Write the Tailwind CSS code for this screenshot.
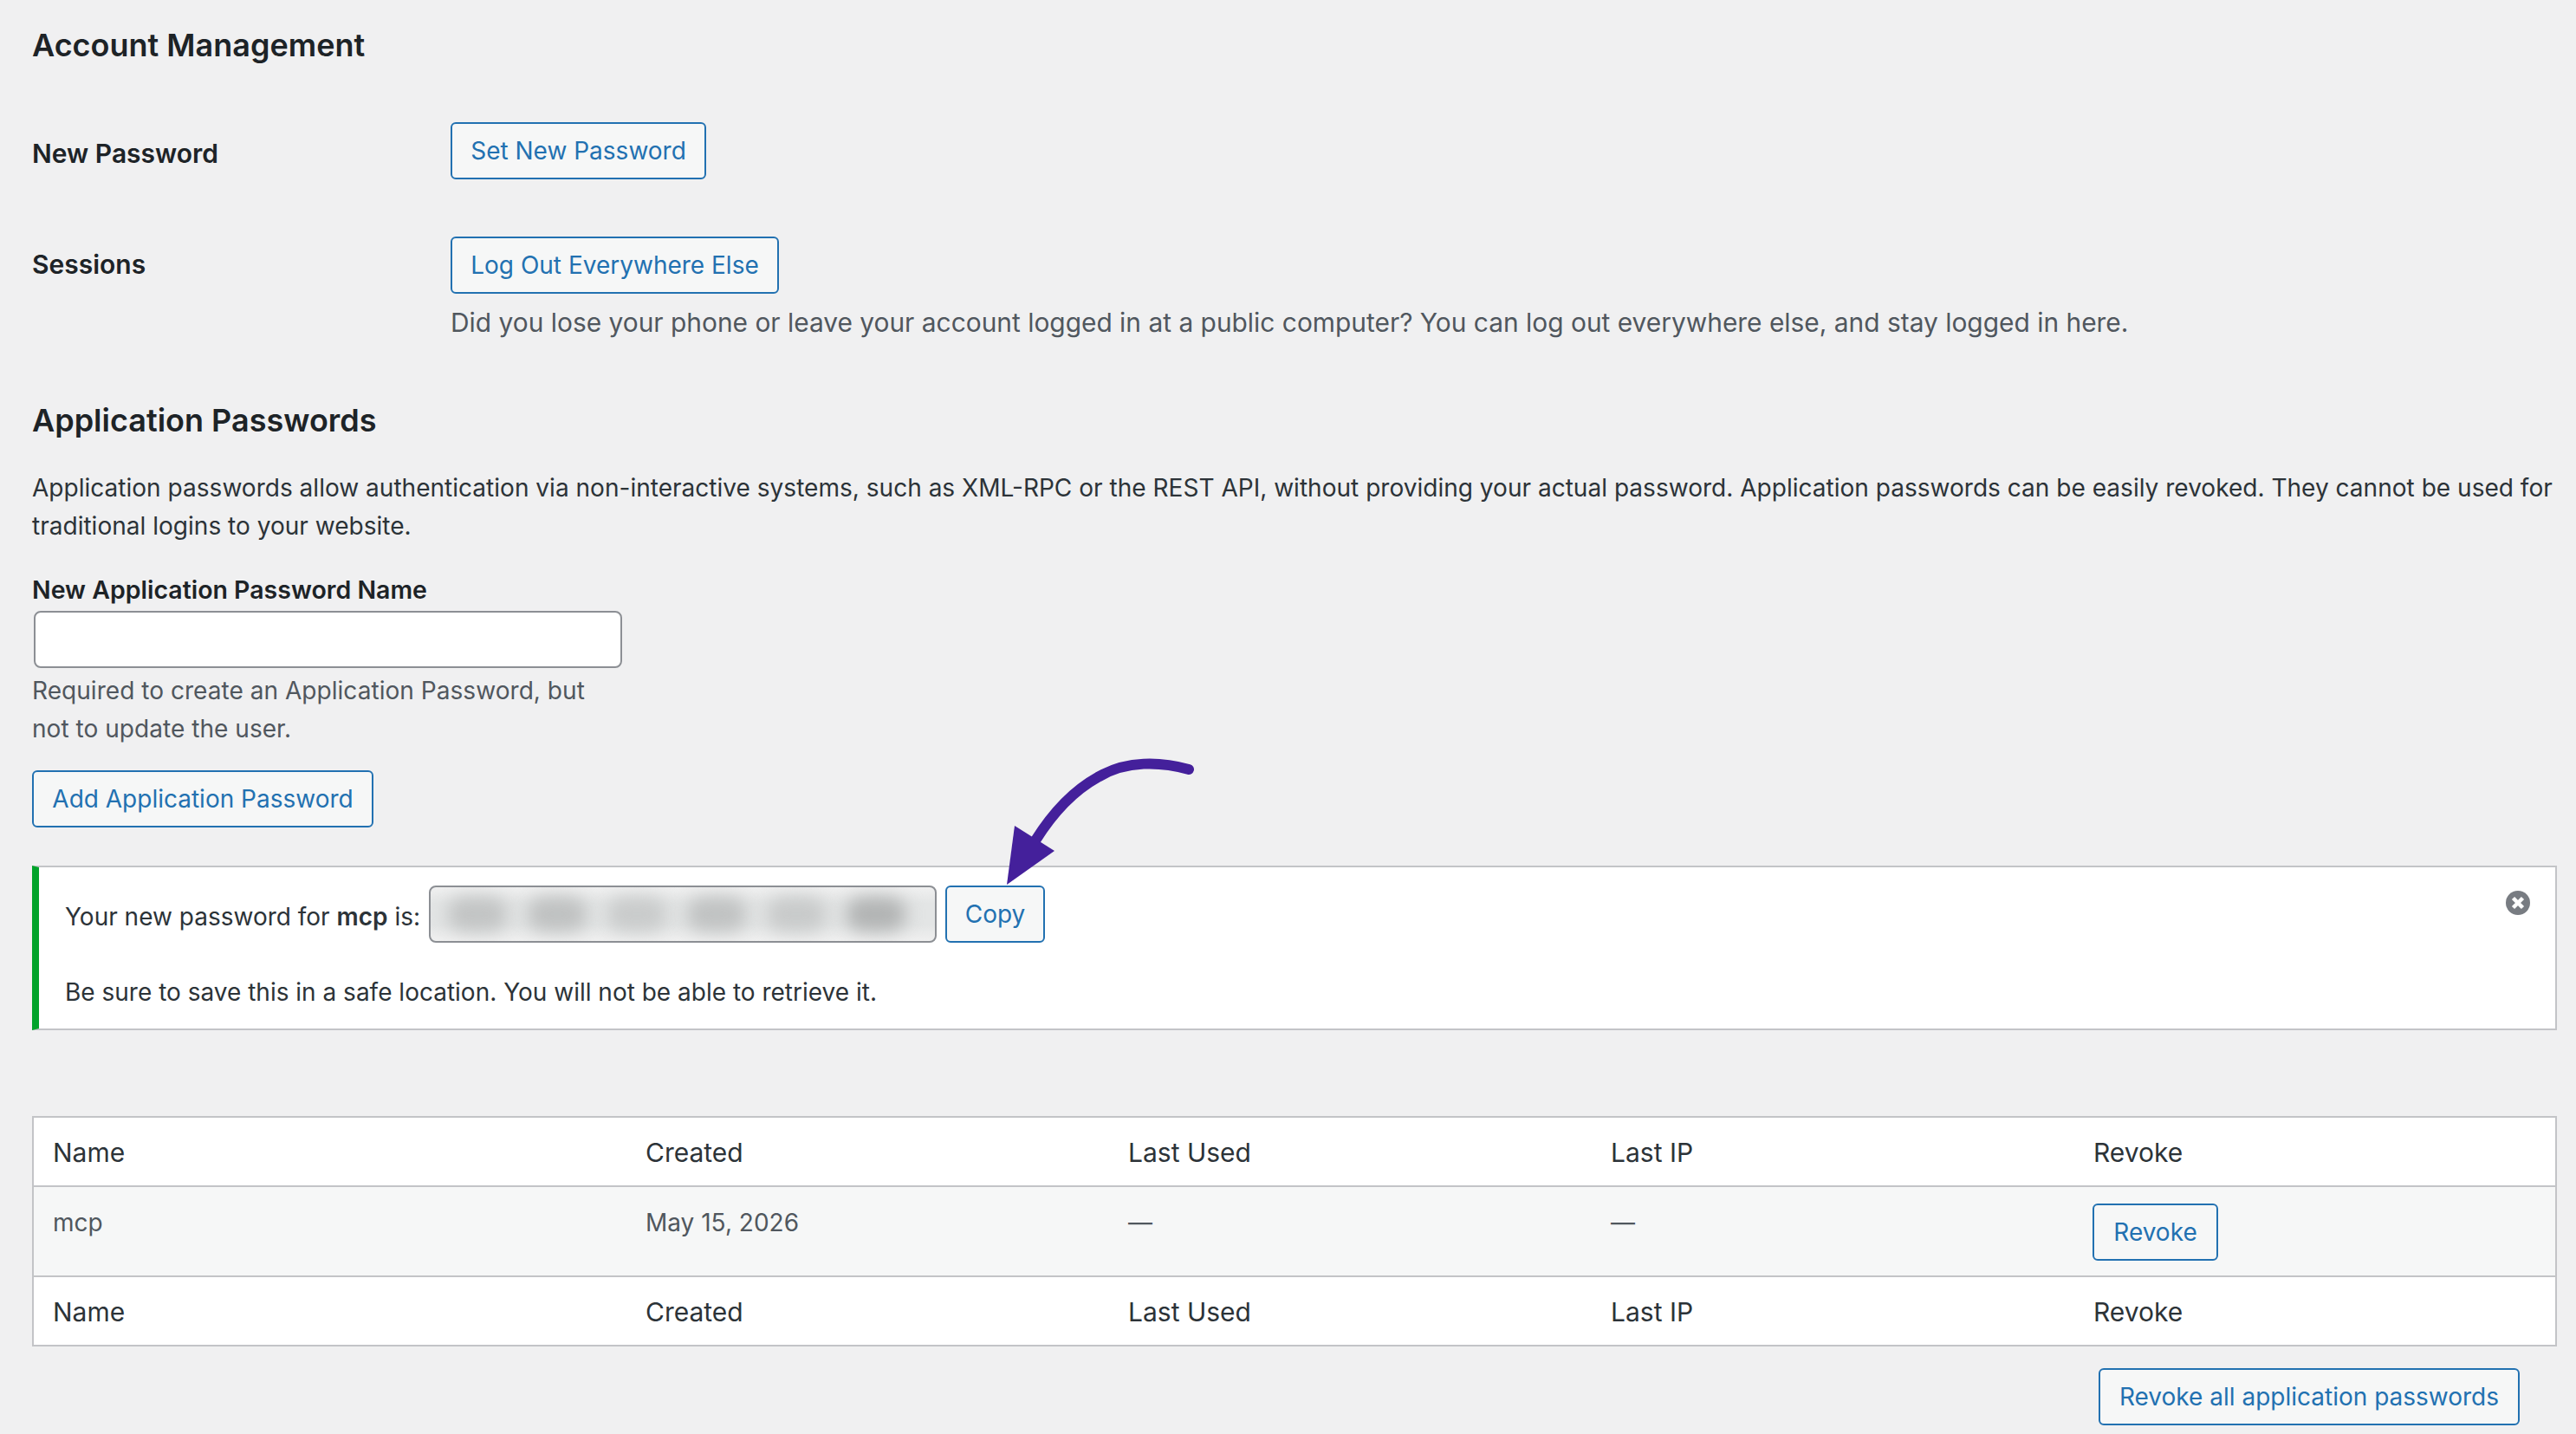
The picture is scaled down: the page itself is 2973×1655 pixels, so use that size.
<!DOCTYPE html>
<html lang="en">
<head>
  <meta charset="UTF-8" />
  <title>Profile</title>
  <script src="https://cdn.jsdelivr.net/npm/@tailwindcss/browser@4"></script>
</head>
<body class="bg-[#f0f0f1] text-[#2c3338] font-['Inter','Liberation_Sans',sans-serif] text-[28px] leading-[44px] relative w-[2973px] h-[1655px] overflow-hidden">

  <div class="pl-[37px] pr-[22px] pt-[28px]">
    <!-- Account Management -->
    <h2 class="text-[36px] leading-[48px] font-semibold text-[#1d2327]">Account Management</h2>

    <div class="flex mt-[65px]">
      <div class="w-[483px] pt-[14px] font-semibold text-[#1d2327] text-[30px]">New Password</div>
      <button class="h-[66px] w-[295px] border-2 border-[#2271b1] rounded-[6px] bg-[#f6f7f7] text-[#2271b1]">Set New Password</button>
    </div>

    <div class="flex mt-[66px]">
      <div class="w-[483px] pt-[10px] font-semibold text-[#1d2327] text-[30px]">Sessions</div>
      <div>
        <button class="h-[66px] w-[379px] border-2 border-[#2271b1] rounded-[6px] bg-[#f6f7f7] text-[#2271b1]">Log Out Everywhere Else</button>
        <p class="text-[#50575e] mt-[11px] text-[29.9px]">Did you lose your phone or leave your account logged in at a public computer? You can log out everywhere else, and stay logged in here.</p>
      </div>
    </div>

    <!-- Application Passwords -->
    <h2 class="text-[36px] leading-[48px] font-semibold text-[#1d2327] mt-[67px]">Application Passwords</h2>
    <p class="mt-[32px] pr-[2px] text-[28.05px]">Application passwords allow authentication via non-interactive systems, such as XML-RPC or the REST API, without providing your actual password. Application passwords can be easily revoked. They cannot be used for traditional logins to your website.</p>

    <label class="block font-semibold text-[#1d2327] text-[28.5px] mt-[30px]">New Application Password Name</label>
    <input type="text" class="block w-[679px] h-[66px] ml-[2px] mt-[2px] border-2 border-[#8c8f94] rounded-[8px] bg-white" />
    <p class="w-[680px] text-[#50575e] text-[28.1px] mt-[4px]">Required to create an Application Password, but not to update the user.</p>
    <button class="h-[66px] w-[394px] mt-[26px] border-2 border-[#2271b1] rounded-[6px] bg-[#f6f7f7] text-[#2271b1]">Add Application Password</button>

    <!-- Notice -->
    <div class="relative mt-[44px] h-[190px] border-2 border-[#c3c4c7] border-l-[8px] border-l-[#00a32a] bg-white pl-[30px] pt-[21px]">
      <div class="flex items-center gap-[10px]">
        <span class="pt-[5px]">Your new password for <b class="font-semibold">mcp</b> is:</span>
        <div class="flex items-center justify-center gap-[22px] w-[586px] h-[66px] pr-[14px] border-2 border-[#8c8f94] rounded-[8px] bg-[linear-gradient(180deg,#f0f0f0,#e3e5e5_30%,#e3e5e5_70%,#f0f0f0)] overflow-hidden">
          <span class="w-[70px] h-[40px] rounded-full bg-[#c2c4c4] blur-[10px]"></span>
          <span class="w-[70px] h-[40px] rounded-full bg-[#bfc1c1] blur-[10px]"></span>
          <span class="w-[70px] h-[40px] rounded-full bg-[#c9cbcb] blur-[10px]"></span>
          <span class="w-[70px] h-[40px] rounded-full bg-[#c0c2c2] blur-[10px]"></span>
          <span class="w-[70px] h-[40px] rounded-full bg-[#c8caca] blur-[10px]"></span>
          <span class="w-[70px] h-[40px] rounded-full bg-[#b2b4b4] blur-[10px]"></span>
        </div>
        <button class="h-[66px] w-[115px] border-2 border-[#2271b1] rounded-[6px] bg-[#f6f7f7] text-[#2271b1]">Copy</button>
      </div>
      <p class="mt-[35px]">Be sure to save this in a safe location. You will not be able to retrieve it.</p>
      <svg class="absolute right-[29px] top-[27px] w-[28px] h-[28px]" viewBox="0 0 28 28">
        <circle cx="14" cy="14" r="14" fill="#787c82"/>
        <path d="M8.5 8.5l11 11M19.5 8.5l-11 11" stroke="#fff" stroke-width="4.5"/>
      </svg>
    </div>

    <!-- Table -->
    <table class="w-[2914px] table-fixed mt-[99px] border-2 border-[#c3c4c7] bg-white border-collapse">
      <colgroup><col class="w-[684px]"/><col class="w-[557px]"/><col class="w-[557px]"/><col class="w-[557px]"/><col/></colgroup>
      <thead>
        <tr class="h-[80px] border-b-2 border-[#c3c4c7] text-left text-[30px]">
          <th class="font-normal pl-[22px] pt-[2px]">Name</th><th class="font-normal pl-[23px] pt-[2px]">Created</th><th class="font-normal pl-[23px] pt-[2px]">Last Used</th><th class="font-normal pl-[23px] pt-[2px]">Last IP</th><th class="font-normal pl-[23px] pt-[2px]">Revoke</th>
        </tr>
      </thead>
      <tbody>
        <tr class="h-[104px] bg-[#f6f7f7] text-[#50575e] align-top">
          <td class="pl-[22px] pt-[19px]">mcp</td><td class="pl-[23px] pt-[19px]">May 15, 2026</td><td class="pl-[23px] pt-[19px]">—</td><td class="pl-[23px] pt-[19px]">—</td>
          <td class="pl-[22px] pt-[19px]"><button class="h-[66px] w-[145px] border-2 border-[#2271b1] rounded-[6px] bg-[#f6f7f7] text-[#2271b1]">Revoke</button></td>
        </tr>
      </tbody>
      <tfoot>
        <tr class="h-[80px] border-t-2 border-[#c3c4c7] text-left text-[30px]">
          <th class="font-normal pl-[22px] pt-[2px]">Name</th><th class="font-normal pl-[23px] pt-[2px]">Created</th><th class="font-normal pl-[23px] pt-[2px]">Last Used</th><th class="font-normal pl-[23px] pt-[2px]">Last IP</th><th class="font-normal pl-[23px] pt-[2px]">Revoke</th>
        </tr>
      </tfoot>
    </table>

    <div class="flex justify-end pr-[43px] mt-[25px]">
      <button class="h-[66px] w-[486px] border-2 border-[#2271b1] rounded-[6px] bg-[#f6f7f7] text-[#2271b1]">Revoke all application passwords</button>
    </div>
  </div>

  <!-- Arrow drawn over the screenshot -->
  <svg class="absolute left-0 top-0 pointer-events-none" width="2973" height="1655" viewBox="0 0 2973 1655">
    <path d="M1372 888 C1340 879 1300 877 1267 897 C1240 912 1215 938 1195 970" fill="none" stroke="#44209b" stroke-width="12" stroke-linecap="round"/>
    <path d="M1162 1021 L1171 953 L1217 982 Z" fill="#44209b"/>
  </svg>
</body>
</html>
